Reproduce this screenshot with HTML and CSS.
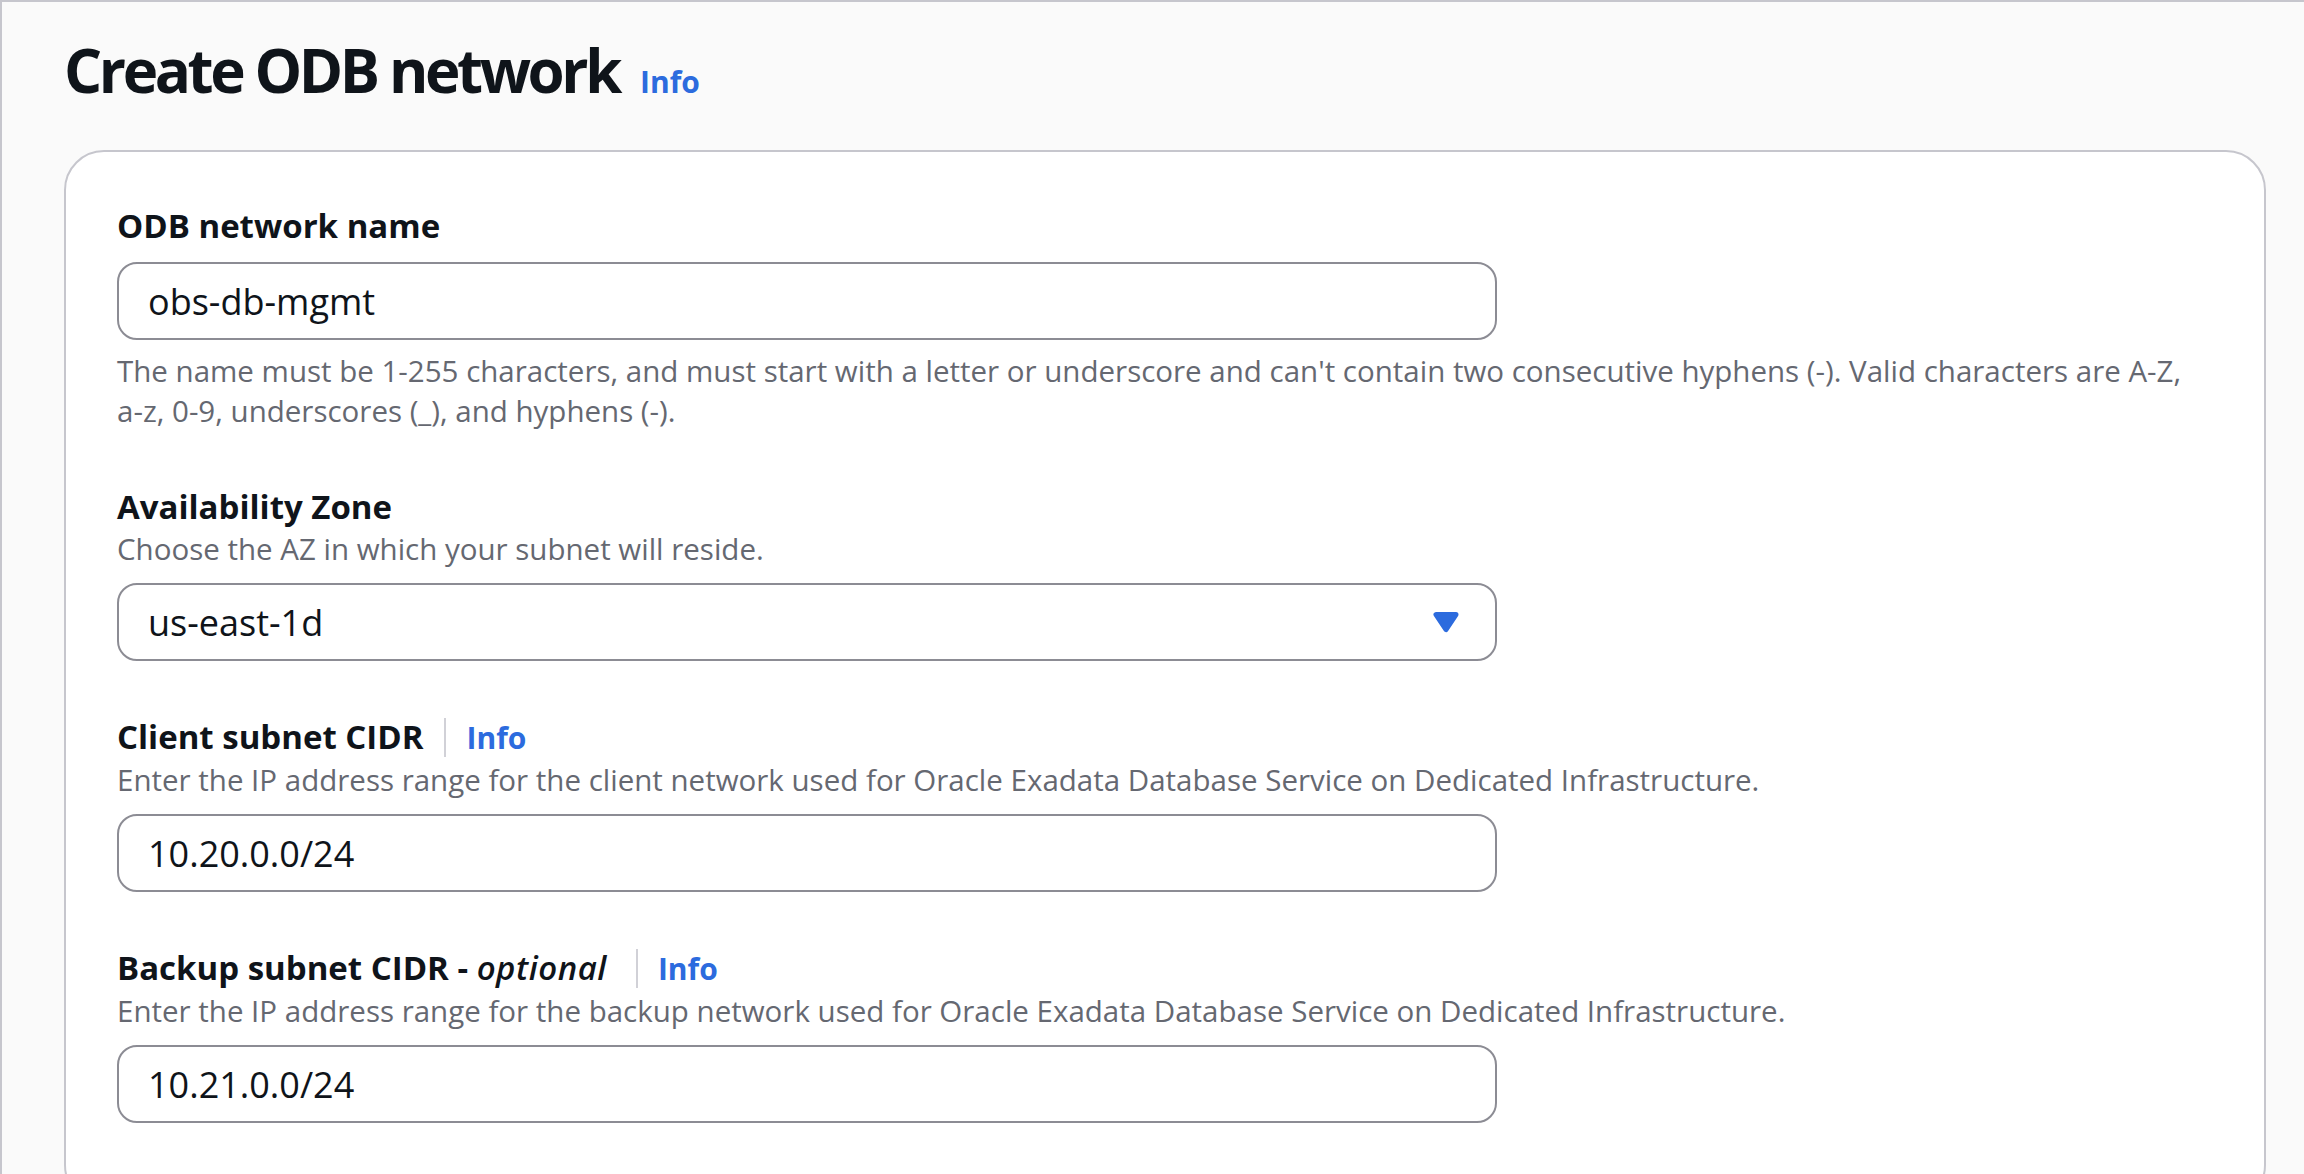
FILE: index.html
```html
<!DOCTYPE html>
<html lang="en">
<head>
<meta charset="utf-8">
<title>Create ODB network</title>
<link rel="stylesheet" href="styles.css">
</head>
<body>
<div class="frame">
  <header class="page-header">
    <h1 class="title">Create ODB network</h1>
    <a class="info info-title" href="#">Info</a>
  </header>

  <section class="card">
    <div class="field">
      <div class="label"><span class="label-text">ODB network name</span></div>
      <div class="control"><span class="value">obs-db-mgmt</span></div>
      <div class="constraint">
        <span class="line">The name must be 1-255 characters, and must start with a letter or underscore and can't contain two consecutive hyphens (-). Valid characters are A-Z,</span>
        <span class="line">a-z, 0-9, underscores (_), and hyphens (-).</span>
      </div>
    </div>

    <div class="field">
      <div class="label"><span class="label-text">Availability Zone</span></div>
      <div class="desc">Choose the AZ in which your subnet will reside.</div>
      <div class="control select">
        <span class="value">us-east-1d</span>
        <svg class="caret" viewBox="0 0 16 16" aria-hidden="true"><path d="M4 5h8l-4 6-4-6z"/></svg>
      </div>
    </div>

    <div class="field">
      <div class="label">
        <span class="label-text">Client subnet CIDR</span>
        <span class="divider"></span>
        <a class="info" href="#">Info</a>
      </div>
      <div class="desc">Enter the IP address range for the client network used for Oracle Exadata Database Service on Dedicated Infrastructure.</div>
      <div class="control"><span class="value">10.20.0.0/24</span></div>
    </div>

    <div class="field">
      <div class="label">
        <span class="label-text">Backup subnet CIDR - <i class="optional">optional</i></span>
        <span class="divider"></span>
        <a class="info" href="#">Info</a>
      </div>
      <div class="desc">Enter the IP address range for the backup network used for Oracle Exadata Database Service on Dedicated Infrastructure.</div>
      <div class="control"><span class="value">10.21.0.0/24</span></div>
    </div>
  </section>
</div>
</body>
</html>
```

FILE: styles.css
```css
html, body {
  margin: 0;
  padding: 0;
  height: 100%;
  overflow: hidden;
  background: #fafafa;
}

body {
  font-family: "Open Sans", "Noto Sans", sans-serif;
  color: #0f141a;
}

.frame {
  box-sizing: border-box;
  min-height: 100%;
  border-top: 2px solid #c6c6cd;
  border-left: 2px solid #c6c6cd;
  padding: 31px 38px 0 62px;
}

.page-header {
  display: flex;
  align-items: baseline;
  gap: 21px;
}

.title {
  margin: 0;
  font-size: 60px;
  line-height: 75px;
  font-weight: 700;
  letter-spacing: -3.4px;
}

.info {
  color: #2c6bde;
  text-decoration: none;
  font-weight: 700;
  font-size: 30px;
}

.card {
  margin-top: 42px;
  background: #ffffff;
  border: 2px solid #c6c6cd;
  border-radius: 40px;
  padding: 51px 50px 80px 51px;
  display: flex;
  flex-direction: column;
  gap: 53px;
}

.field {
  display: flex;
  flex-direction: column;
}

.label {
  display: flex;
  align-items: baseline;
  font-size: 33px;
  line-height: 45px;
  font-weight: 700;
}

.optional {
  font-weight: 600;
  letter-spacing: 0.5px;
  padding-right: 8px;
}

.divider {
  align-self: center;
  width: 2px;
  height: 39px;
  background: #d1d1d7;
  margin: 0 20px 0 21px;
}

.desc {
  font-size: 29.5px;
  line-height: 40px;
  color: #656871;
}

.control {
  box-sizing: border-box;
  margin-top: 14px;
  width: 1380px;
  height: 78px;
  border: 2px solid #8c8c94;
  border-radius: 20px;
  padding: 0 29px;
  display: flex;
  align-items: center;
  background: #ffffff;
}

.value {
  font-size: 36px;
  color: #0f141a;
}

.select {
  justify-content: space-between;
}

.caret {
  width: 40px;
  height: 40px;
  fill: #2c6bde;
  stroke: #2c6bde;
  stroke-width: 2;
  stroke-linejoin: round;
}

.constraint {
  margin-top: 11px;
  font-size: 29.5px;
  line-height: 40px;
  color: #656871;
}

.constraint .line {
  display: block;
  white-space: nowrap;
}
```
